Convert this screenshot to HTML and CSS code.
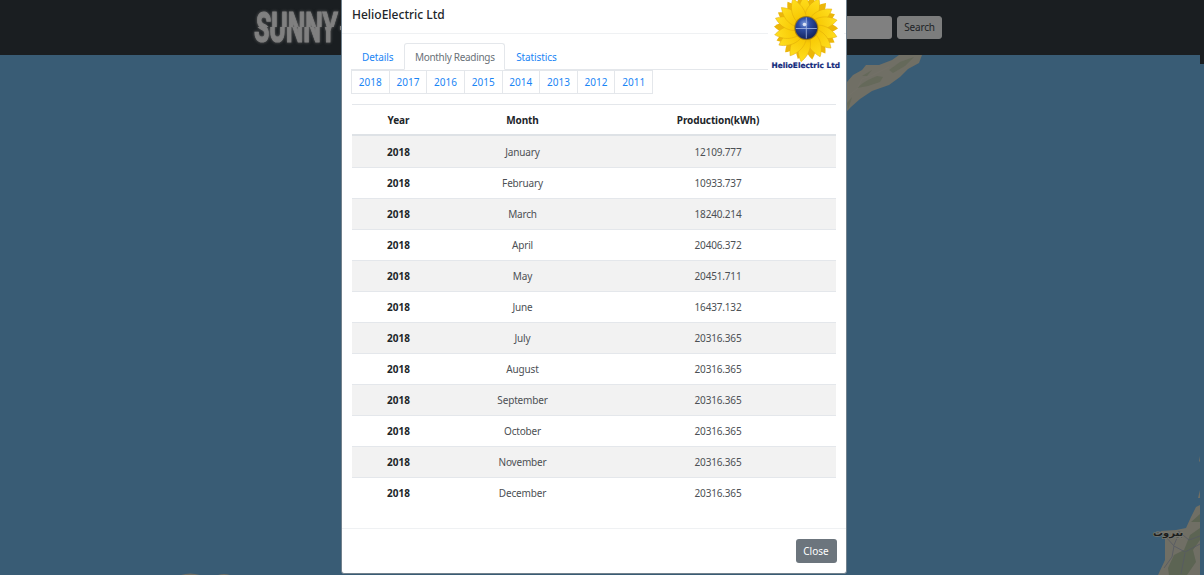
FILE: index.html
```html
<!DOCTYPE html>
<html lang="en">
<head>
<meta charset="utf-8">
<title>Sunny</title>
<link rel="stylesheet" href="styles.css">
</head>
<body>
<div class="page">
  <header class="navbar">
    <svg class="brand" width="110" height="55" viewBox="0 0 110 55">
      <defs>
        <clipPath id="upper"><rect width="110" height="27"/></clipPath>
        <clipPath id="lower"><rect y="27" width="110" height="28"/></clipPath>
      </defs>
      <g clip-path="url(#upper)"><text id="word" class="brand-text" x="8" y="42" textLength="82" lengthAdjust="spacingAndGlyphs">SUNNY</text></g>
      <g clip-path="url(#lower)"><use href="#word" x="-2"/></g>
      <path d="M92 26H104V30H92Z" fill="#808080"/>
    </svg>
    <form class="search"><span class="search-input"></span><button class="search-button" type="button">Search</button></form>
  </header>
  <main class="map">
    <svg class="land" width="1204" height="520" viewBox="0 55 1204 520">
      <g fill="#706f65">
        <path d="M840 118V85L847 82 853 75 862 70 866 65 879 65 892 60 899 55H922L919 63 908 69 900 77 889 85 872 91 860 99 851 107Z"/>
        <path d="M1158 575L1165 560 1165 535 1160 531 1176 530 1186 528 1191 517 1196 507 1200 505V575ZM1198 498L1200 490V498ZM1199 461L1200 456V462ZM181 575Q190 572 200 575ZM218 575Q224 573 230 575Z"/>
      </g>
      <g fill="#59644f" opacity=".5">
        <path d="M857 88L863 83 868 80 877 76 883 77 880 82 868 86ZM889 70L900 62 914 57 905 66 893 73ZM847 103L852 97 848 110ZM862 76L872 70 867 76Z"/>
      </g>
      <g fill="#56604d" opacity=".75">
        <path d="M1168 568L1174 555 1184 550 1190 535 1200 528V540L1193 550 1196 562 1187 575H1169ZM1191 522L1200 514V522Z"/>
      </g>
      <g fill="none" stroke="#555963" stroke-width=".8">
        <path d="M1166 537L1174 546 1172 557 1164 568M1174 546L1185 552 1200 544M1180 531L1174 545M1178 531L1189 540 1200 536M1185 553L1181 574"/>
        <path d="M848 96L857 89 862 79 873 75 889 67" stroke="#747168"/>
      </g>
      <text class="city" x="1153" y="536">بيروت</text>
    </svg>
    <span class="map-edge"></span>
  </main>
</div>

<section class="modal">
  <header class="modal-header"><h5 class="modal-title">HelioElectric Ltd</h5></header>
  <div class="modal-body">
    <nav class="tabs"><a class="tab">Details</a><a class="tab active">Monthly Readings</a><a class="tab">Statistics</a></nav>
    <nav class="years"><a>2018</a><a>2017</a><a>2016</a><a>2015</a><a>2014</a><a>2013</a><a>2012</a><a>2011</a></nav>
    <table class="readings">
      <colgroup><col class="col-year"><col class="col-month"><col></colgroup>
      <thead><tr><th>Year</th><th>Month</th><th>Production(kWh)</th></tr></thead>
      <tbody>
        <tr><th>2018</th><td>January</td><td>12109.777</td></tr>
        <tr><th>2018</th><td>February</td><td>10933.737</td></tr>
        <tr><th>2018</th><td>March</td><td>18240.214</td></tr>
        <tr><th>2018</th><td>April</td><td>20406.372</td></tr>
        <tr><th>2018</th><td>May</td><td>20451.711</td></tr>
        <tr><th>2018</th><td>June</td><td>16437.132</td></tr>
        <tr><th>2018</th><td>July</td><td>20316.365</td></tr>
        <tr><th>2018</th><td>August</td><td>20316.365</td></tr>
        <tr><th>2018</th><td>September</td><td>20316.365</td></tr>
        <tr><th>2018</th><td>October</td><td>20316.365</td></tr>
        <tr><th>2018</th><td>November</td><td>20316.365</td></tr>
        <tr><th>2018</th><td>December</td><td>20316.365</td></tr>
      </tbody>
    </table>
  </div>
  <footer class="modal-footer"><button class="close-button" type="button">Close</button></footer>
  <svg class="company-logo" width="76" height="72" viewBox="768 0 76 72">
    <defs>
      <radialGradient id="globe" cx=".4" cy=".3" r=".7"><stop offset="0" stop-color="#7d9bdc"/><stop offset=".35" stop-color="#2f4fa6"/><stop offset="1" stop-color="#14245f"/></radialGradient>
      <linearGradient id="gold" x1="0" y1="0" x2="0" y2="1"><stop offset="0" stop-color="#ffdf20"/><stop offset=".6" stop-color="#f8ca05"/><stop offset="1" stop-color="#d09205"/></linearGradient>
      <path id="petal" d="M806 28C797 18 798 5 807-4C813 5 815 17 806 28Z"/>
    </defs>
    <rect x="768" width="76" height="72" fill="#fff"/>
    <g fill="#ecb608">
      <use href="#petal" transform="rotate(11 806 28)"/><use href="#petal" transform="rotate(37 806 28)"/><use href="#petal" transform="rotate(63 806 28)"/><use href="#petal" transform="rotate(89 806 28)"/><use href="#petal" transform="rotate(115 806 28)"/><use href="#petal" transform="rotate(141 806 28)"/><use href="#petal" transform="rotate(167 806 28)"/><use href="#petal" transform="rotate(193 806 28)"/><use href="#petal" transform="rotate(219 806 28)"/><use href="#petal" transform="rotate(245 806 28)"/><use href="#petal" transform="rotate(271 806 28)"/><use href="#petal" transform="rotate(297 806 28)"/><use href="#petal" transform="rotate(323 806 28)"/><use href="#petal" transform="rotate(347 806 28)"/>
    </g>
    <g fill="url(#gold)" stroke="#e0aa0a" stroke-width=".5">
      <use href="#petal" transform="rotate(-4 806 28)"/><use href="#petal" transform="rotate(22 806 28)"/><use href="#petal" transform="rotate(52 806 28)"/><use href="#petal" transform="rotate(74 806 28)"/><use href="#petal" transform="rotate(104 806 28)"/><use href="#petal" transform="rotate(127 806 28)"/><use href="#petal" transform="rotate(152 806 28)"/><use href="#petal" transform="translate(0 2) rotate(187 806 28)"/><use href="#petal" transform="rotate(208 806 28)"/><use href="#petal" transform="rotate(236 806 28)"/><use href="#petal" transform="rotate(256 806 28)"/><use href="#petal" transform="rotate(286 806 28)"/><use href="#petal" transform="rotate(308 806 28)"/><use href="#petal" transform="rotate(334 806 28)"/>
    </g>
    <circle cx="806.3" cy="28" r="12" fill="#a27c10"/>
    <circle cx="806.3" cy="28" r="11" fill="url(#globe)"/>
    <path d="M806.3 17.5V38.5M795.8 28.5H816.8" stroke="#a9bbe6" stroke-width=".8"/>
    <circle cx="804.5" cy="24.5" r="1.8" fill="#fff" opacity=".75"/>
    <text class="logo-text" x="771.5" y="68.3" textLength="68.5" lengthAdjust="spacingAndGlyphs">HelioElectric Ltd</text>
  </svg>
</section>
</body>
</html>
```
FILE: styles.css
```css
* { box-sizing: border-box; }
body { margin: 0; height: 575px; overflow: hidden; position: relative; font: 10px/15px "Noto Sans", sans-serif; color: #212529; }
.page { display: flex; flex-direction: column; height: 575px; }
.navbar { height: 55px; background: #1a1e21; display: flex; justify-content: space-between; align-items: center; padding: 0 262px 0 248px; }
.brand { filter: drop-shadow(0 0 1.5px #666); }
.brand-text { font: bold 43px Roboto, sans-serif; fill: #808080; stroke: #808080; stroke-width: 1.2px; }
.search { display: flex; gap: 5px; }
.search-input { width: 92px; height: 23px; background: #808080; border-radius: 3px; }
.search-button { width: 45px; height: 23px; padding: 0; border: 1px solid #7c7d7d; border-radius: 3px; background: #7c7d7d; color: #202326; font: inherit; letter-spacing: -.2px; }
.map { position: relative; flex: 1; background: #395c75; }
.land { display: block; }
.city { font: bold 10px "DejaVu Sans", sans-serif; fill: #1c1d1d; stroke: #77776f; stroke-width: 1.5px; paint-order: stroke; }
.map-edge { position: absolute; right: 0; top: 0; width: 4px; height: 9px; background: #1a1e21; }

.modal { position: absolute; left: 341px; top: -5px; width: 506px; height: 579px; display: flex; flex-direction: column; background: #fff; border: 1px solid #71818d; border-radius: 3px; }
.modal-header { height: 38px; padding: 11px 10px 0; border-bottom: 1px solid #eff1f3; }
.modal-title { margin: 0; font-size: 12px; line-height: 16px; font-weight: 500; }
.modal-body { flex: 1; padding: 9px 10px 0 9px; }
.tabs { display: flex; height: 27px; border-bottom: 1px solid #e4e7eb; }
.tab { height: 27px; padding: 6px 10px 4px; border: 1px solid transparent; color: #1a85f5; white-space: nowrap; letter-spacing: -.1px; }
.tab.active { padding: 6px 9.5px 4px; color: #6a7178; background: #fff; border-color: #e4e7eb #e4e7eb #fff; border-radius: 3px 3px 0 0; letter-spacing: -.31px; }
.years { display: flex; width: 302px; height: 24px; border: 1px solid #e4e7eb; }
.years a { flex: 1; padding-top: 4px; text-align: center; color: #1a85f5; }
.years a + a { border-left: 1px solid #e4e7eb; }
.readings { width: 484px; margin: 10px 0 0 auto; table-layout: fixed; border-collapse: separate; border-spacing: 0; text-align: center; }
.col-year { width: 93px; }
.col-month { width: 155px; }
.readings th, .readings td { height: 31px; padding: 0; border-top: 1px solid #e4e7eb; }
.readings td { color: #4c5054; letter-spacing: -.17px; }
.readings thead th { height: 32px; padding-top: 2px; border-bottom: 2px solid #dee2e6; letter-spacing: -.1px; }
.readings tbody tr:first-child > * { border-top: 0; padding-top: 1px; }
.readings tbody tr:nth-child(odd) { background: #f2f2f2; }
.modal-footer { height: 45px; display: flex; justify-content: flex-end; align-items: center; padding: 0 9.5px; border-top: 1px solid #eff1f3; }
.close-button { width: 41px; height: 24px; padding: 0; border: 0; border-radius: 3px; background: #6c757d; color: #fff; font: inherit; }
.company-logo { position: absolute; left: 426px; top: 4px; }
.logo-text { font: bold 7.5px "DejaVu Sans", sans-serif; fill: #132a7c; stroke: #132a7c; stroke-width: .2px; }
```
